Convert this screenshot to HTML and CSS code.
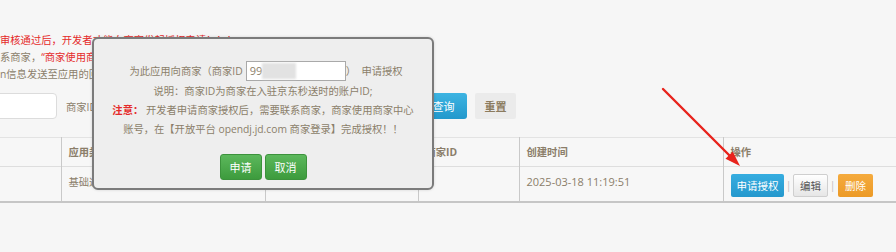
FILE: index.html
```html
<!DOCTYPE html>
<html lang="zh-CN">
<head>
<meta charset="utf-8">
<title>申请授权</title>
<link rel="stylesheet" href="styles.css">
</head>
<body>
<div class="page">
  <div class="notice">
    <p class="red">审核通过后，开发者才能向商家发起授权申请！！！</p>
    <p class="clip">系商家，<span class="red">“商家使用商家中心账号登录开放平台完成授权”</span></p>
    <p class="clip">n信息发送至应用的回调地址。</p>
  </div>
  <div class="search">
    <span class="field field-a"></span>
    <span class="label">商家ID</span>
    <span class="field field-b"></span>
    <button class="btn btn-query">查询</button>
    <button class="btn btn-reset">重置</button>
  </div>
  <table class="grid">
    <colgroup>
      <col class="c1"><col class="c2"><col class="c3"><col class="c4"><col class="c5"><col>
    </colgroup>
    <thead>
      <tr><th></th><th>应用类型</th><th>应用名称</th><th>商家ID</th><th>创建时间</th><th>操作</th></tr>
    </thead>
    <tbody>
      <tr>
        <td></td><td>基础通用</td><td></td><td></td><td class="date">2025-03-18 11:19:51</td>
        <td class="ops"><button class="op op-auth">申请授权</button><span class="sep">|</span><button class="op op-edit">编辑</button><span class="sep">|</span><button class="op op-del">删除</button></td>
      </tr>
    </tbody>
  </table>
</div>

<div class="modal">
  <div class="m-row">为此应用向商家（商家ID<span class="m-input">99<span class="blur"></span></span>）&nbsp;&nbsp;申请授权</div>
  <p class="m-text">说明：商家ID为商家在入驻京东秒送时的账户ID;</p>
  <p class="m-text"><b class="red">注意：</b> 开发者申请商家授权后，需要联系商家，商家使用商家中心<br>账号，在【开放平台 opendj.jd.com 商家登录】完成授权！！</p>
  <div class="m-actions"><button class="g-btn">申请</button><button class="g-btn">取消</button></div>
</div>

<svg class="arrow" width="896" height="252" viewBox="0 0 896 252">
  <line x1="663" y1="89" x2="731" y2="157" stroke="#e8231c" stroke-width="2.4" stroke-linecap="round"/>
  <polygon points="740,166 725.5,158.8 732.8,151.5" fill="#e8231c"/>
</svg>
</body>
</html>
```

FILE: styles.css
```css
html, body {
  margin: 0;
  padding: 0;
  background: #f6f6f6;
  overflow: hidden;
}
body {
  width: 896px;
  height: 252px;
  position: relative;
  font-family: "Open Sans", "Noto Sans CJK SC", sans-serif;
  font-size: 10.3px;
  color: #8b7e6a;
}
.page {
  padding-top: 32px;
}
.red {
  color: #e52a2a;
}
.notice p {
  margin: 0;
  line-height: 17px;
  white-space: nowrap;
}
.notice p.clip {
  width: 94px;
  overflow: hidden;
}
.search {
  display: flex;
  align-items: center;
  height: 26px;
  margin-top: 10px;
}
.field {
  display: block;
  height: 26px;
  box-sizing: border-box;
  background: #fff;
  border: 1px solid #dcdcdc;
  border-radius: 4px;
}
.field-a {
  width: 87px;
  margin-left: -30px;
}
.label {
  margin-left: 9px;
  width: 26px;
  overflow: hidden;
  white-space: nowrap;
}
.field-b {
  width: 316px;
  margin-left: 6px;
}
.btn {
  height: 26px;
  border: 0;
  border-radius: 3px;
  font-family: inherit;
  font-size: 11px;
  padding: 0;
}
.btn-query {
  width: 47px;
  margin-left: 6px;
  color: #fff;
  background: linear-gradient(#3db4e2, #2298cc);
}
.btn-reset {
  width: 41px;
  margin-left: 8px;
  color: #8b7b5e;
  font-weight: bold;
  background: #ebebeb;
  border-radius: 2px;
}
.grid {
  margin-top: 18px;
  width: 100%;
  border-collapse: collapse;
  table-layout: fixed;
}
.c1 { width: 61px; }
.c2 { width: 204px; }
.c3 { width: 153px; }
.c4 { width: 101px; }
.c5 { width: 204px; }
.grid th, .grid td {
  text-align: left;
  vertical-align: top;
  padding: 6px 7px;
  line-height: 16px;
  border-left: 1px solid #c9c9c9;
  white-space: nowrap;
  overflow: hidden;
}
.grid th:first-child, .grid td:first-child {
  border-left: 0;
}
.grid thead tr {
  border-top: 1px solid #e3e3e3;
  border-bottom: 1px solid #dedede;
  background: #f7f7f7;
}
.grid th {
  font-weight: bold;
  height: 16px;
}
.grid tbody tr {
  border-bottom: 2px solid #c6c6c6;
  background: #f7f7f7;
}
.grid td {
  padding-top: 7px;
  height: 27px;
  padding-bottom: 0;
}
.grid td.date {
  font-size: 11px;
}
.ops {
  display: block;
}
.op {
  height: 23px;
  border: 0;
  border-radius: 2px;
  padding: 0;
  font-family: inherit;
  font-size: 10.5px;
  vertical-align: top;
}
.op-auth {
  width: 53px;
  color: #fff;
  background: linear-gradient(#36ade0, #2598cd);
}
.op-edit {
  width: 35px;
  color: #555;
  background: linear-gradient(#ffffff, #e6e6e6);
  border: 1px solid #cfcfcf;
}
.op-del {
  width: 35px;
  color: #fff;
  background: linear-gradient(#f5ab3e, #ec9a26);
}
.sep {
  display: inline-block;
  width: 9px;
  text-align: center;
  color: #bdbdbd;
  line-height: 23px;
  vertical-align: top;
}
.sep + .op-del {
  margin-left: 1px;
}

.modal {
  position: absolute;
  left: 92px;
  top: 37px;
  width: 342px;
  height: 153px;
  box-sizing: border-box;
  background: #eeeeee;
  border: 2px solid #7b7b7b;
  border-radius: 6px;
  padding-top: 21px;
  text-align: center;
  box-shadow: 0 0 3px rgba(0,0,0,0.15);
}
.m-row {
  height: 22px;
  line-height: 22px;
  display: flex;
  justify-content: center;
  align-items: center;
  white-space: nowrap;
  margin-left: 6px;
}
.m-input {
  display: inline-block;
  position: relative;
  width: 100px;
  height: 20px;
  margin-left: 3px;
  box-sizing: border-box;
  background: #fff;
  border: 1px solid #a9a9a9;
  text-align: left;
  padding-left: 3px;
  line-height: 18px;
  font-size: 11px;
  color: #8b7e6a;
}
.blur {
  display: inline-block;
  width: 34px;
  height: 16px;
  vertical-align: top;
  margin-top: 1px;
  background: #e2e2e2;
  filter: blur(1px);
}
.m-text {
  margin: 0;
  line-height: 19px;
  white-space: nowrap;
}
.m-actions {
  display: flex;
  justify-content: center;
  gap: 3px;
  margin-top: 15px;
}
.g-btn {
  width: 42px;
  height: 26px;
  padding: 0;
  border: 1px solid #3c923c;
  border-radius: 3px;
  color: #fff;
  font-family: inherit;
  font-size: 11px;
  background: linear-gradient(#5cb85c, #3d9b3d);
}
.arrow {
  position: absolute;
  left: 0;
  top: 0;
  pointer-events: none;
}
```
